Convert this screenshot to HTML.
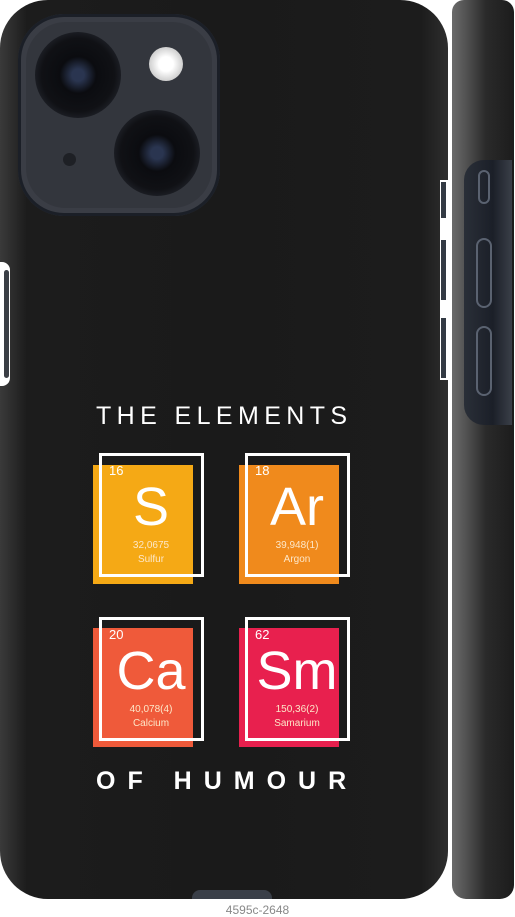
<!DOCTYPE html>
<html><head><style>
*{margin:0;padding:0;box-sizing:border-box}
body{width:515px;height:917px;background:#fff;position:relative;overflow:hidden;font-family:"Liberation Sans",sans-serif}
.case{position:absolute;left:0;top:0;width:448px;height:899px;border-radius:48px;background:linear-gradient(90deg,#3a3a3a 0%,#1c1c1c 6%,#1a1a1a 50%,#1c1c1c 94%,#2e2e2e 100%)}
.btnl{position:absolute;left:0;top:262px;width:10px;height:124px;background:#fff;border-radius:0 8px 8px 0}
.btnl i{position:absolute;left:4px;top:8px;width:5px;height:108px;background:#3a3e45;border-radius:3px}
.cam{position:absolute;left:18px;top:14px;width:202px;height:202px;border-radius:46px;background:#3a3d45;box-shadow:0 0 0 3px #1b1f27 inset}
.cam2{position:absolute;left:8px;top:8px;right:8px;bottom:8px;border-radius:40px;background:#33363d}
.lens{position:absolute;border-radius:50%;background:radial-gradient(circle,#2a3550 0 10%,#0b0c10 30%,#101115 60%,#1a1c22 70%,#26282e 100%)}
.flash{position:absolute;left:131px;top:33px;width:34px;height:34px;border-radius:50%;background:radial-gradient(circle,#fff 0 30%,#cfcfcf 70%,#777 100%)}
.mic{position:absolute;left:45px;top:139px;width:13px;height:13px;border-radius:50%;background:#1e2025}
.side{position:absolute;left:452px;top:0;width:62px;height:899px;border-radius:12px 12px 14px 14px;background:linear-gradient(90deg,#6a6a6a 0%,#555 20%,#2a2a2a 55%,#1c1c1c 100%)}
.cut{position:absolute;left:464px;top:160px;width:48px;height:265px;background:linear-gradient(90deg,#2a2f38,#1b1f28 60%,#3a3f48);border-radius:20px 0 0 20px}
.b{position:absolute;border:2px solid #5a6270;border-radius:9px;left:476px;width:16px}
.t{position:absolute;color:#fff;letter-spacing:5.4px;font-size:25px;left:96px;width:300px;white-space:nowrap}
.fill{position:absolute;width:100px;height:119px}
.fr{position:absolute;width:105px;height:124px;border:3px solid #fff}
.num{position:absolute;color:#fff;font-size:13px}
.sym{position:absolute;color:#fff;font-size:54px;width:100px;text-align:center}
.sm{position:absolute;color:#fde7c8;font-size:10px;width:100px;text-align:center;line-height:14px}
</style></head><body>
<div class="case"></div>
<div class="btnl"><i></i></div>
<div style="position:absolute;left:440px;top:180px;width:8px;height:200px;background:#fff"></div>
<div style="position:absolute;left:441px;top:182px;width:5px;height:36px;background:#333a44"></div>
<div style="position:absolute;left:441px;top:240px;width:5px;height:60px;background:#333a44"></div>
<div style="position:absolute;left:441px;top:318px;width:5px;height:60px;background:#333a44"></div>
<div style="position:absolute;left:192px;top:890px;width:80px;height:9px;background:#3a3f48;border-radius:8px 8px 0 0"></div>
<div class="cam"><div class="cam2"></div>
<div class="lens" style="left:17px;top:18px;width:86px;height:86px"></div>
<div class="lens" style="left:96px;top:96px;width:86px;height:86px"></div>
<div class="flash"></div><div class="mic"></div></div>
<div class="side"></div>
<div class="cut"></div>
<div class="b" style="top:170px;height:34px;left:478px;width:12px"></div>
<div class="b" style="top:238px;height:70px"></div>
<div class="b" style="top:326px;height:70px"></div>

<div class="t" style="top:402px">THE ELEMENTS</div>

<div class="fill" style="left:93px;top:465px;background:#f5a915"></div>
<div class="fr" style="left:99px;top:453px"></div>
<div class="num" style="left:109px;top:463px">16</div>
<div class="sym" style="left:101px;top:476px">S</div>
<div class="sm" style="left:101px;top:539px">32,0675<br>Sulfur</div>

<div class="fill" style="left:239px;top:465px;background:#f08a1c"></div>
<div class="fr" style="left:245px;top:453px"></div>
<div class="num" style="left:255px;top:463px">18</div>
<div class="sym" style="left:247px;top:476px">Ar</div>
<div class="sm" style="left:247px;top:539px">39,948(1)<br>Argon</div>

<div class="fill" style="left:93px;top:628px;background:#ef5a3a"></div>
<div class="fr" style="left:99px;top:617px"></div>
<div class="num" style="left:109px;top:627px">20</div>
<div class="sym" style="left:101px;top:640px">Ca</div>
<div class="sm" style="left:101px;top:703px">40,078(4)<br>Calcium</div>

<div class="fill" style="left:239px;top:628px;background:#e8204e"></div>
<div class="fr" style="left:245px;top:617px"></div>
<div class="num" style="left:255px;top:627px">62</div>
<div class="sym" style="left:247px;top:640px">Sm</div>
<div class="sm" style="left:247px;top:703px">150,36(2)<br>Samarium</div>

<div class="t" style="top:767px;font-weight:bold;letter-spacing:12px;font-size:25px">OF HUMOUR</div>
<div style="position:absolute;left:0;width:515px;top:903px;text-align:center;color:#888;font-size:12px">4595c-2648</div>
</body></html>
